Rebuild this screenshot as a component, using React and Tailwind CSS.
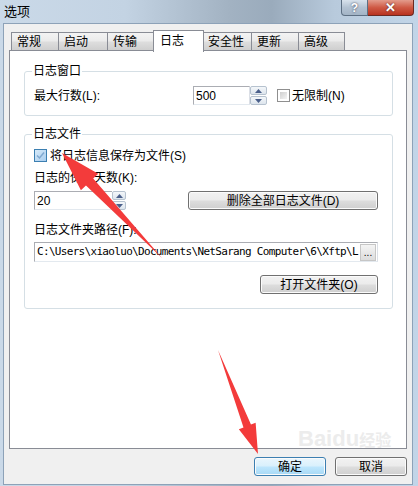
import React from "react";

const sans = "font-['Liberation_Sans','Noto_Sans_CJK_SC',sans-serif]";

const arrowPoints = (tx, ty, px, py, hl, hw, sw) => {
  const len = Math.hypot(px - tx, py - ty);
  const ux = (px - tx) / len;
  const uy = (py - ty) / len;
  const nx = -uy;
  const ny = ux;
  const bx = px - ux * hl;
  const by = py - uy * hl;
  const pts = [
    [tx, ty],
    [bx + (nx * sw) / 2, by + (ny * sw) / 2],
    [bx + (nx * hw) / 2, by + (ny * hw) / 2],
    [px, py],
    [bx - (nx * hw) / 2, by - (ny * hw) / 2],
    [bx - (nx * sw) / 2, by - (ny * sw) / 2],
  ];
  return pts.map((p) => p.join(",")).join(" ");
};

const Btn = ({ children, className = "" }) => (
  <div
    className={`flex items-center justify-center h-[19px] rounded-[3px] border border-[#707070] bg-[linear-gradient(#f2f2f2,#ebebeb_48%,#dddddd_52%,#cfcfcf)] shadow-[inset_0_0_0_1px_#fbfbfb] text-[12px] text-black ${className}`}
  >
    {children}
  </div>
);

const Tri = ({ up }) => (
  <svg width="7" height="4" viewBox="0 0 7 4">
    <polygon points={up ? "0,4 7,4 3.5,0" : "0,0 7,0 3.5,4"} fill="#4a5f8a" />
  </svg>
);

const Spin = ({ className = "" }) => (
  <div className={`flex flex-col h-[19px] gap-[1px] ${className}`}>
    <div className="flex-1 flex items-center justify-center border border-[#b6c2cf] rounded-[2px] bg-[linear-gradient(#f4f7fa,#dde5ed)]">
      <Tri up />
    </div>
    <div className="flex-1 flex items-center justify-center border border-[#b6c2cf] rounded-[2px] bg-[linear-gradient(#f4f7fa,#dde5ed)]">
      <Tri />
    </div>
  </div>
);

const Check = ({ checked }) =>
  checked ? (
    <div className="w-[13px] h-[13px] border border-[#3c7fb1] bg-[linear-gradient(135deg,#d6eaf9,#a9cdee)] flex items-center justify-center">
      <svg width="9" height="9" viewBox="0 0 9 9">
        <path d="M1 4.5 L3.5 7 L8 1.5" stroke="#7fa8d0" strokeWidth="1.5" fill="none" />
      </svg>
    </div>
  ) : (
    <div className="w-[13px] h-[13px] border border-[#8f8f8f] bg-white p-[2px]">
      <div className="w-full h-full bg-[linear-gradient(135deg,#cfcfcf,#f4f4f4)]" />
    </div>
  );

const tabs = [
  { label: "常规", w: "w-[47px]" },
  { label: "启动", w: "w-[49px]" },
  { label: "传输", w: "w-[48px]" },
  { label: "日志", w: "w-[51px]", active: true },
  { label: "安全性", w: "w-[49px]" },
  { label: "更新", w: "w-[47px]" },
  { label: "高级", w: "w-[47px]", last: true },
];

export default function App() {
  return (
    <div
      className={`relative w-[418px] h-[486px] overflow-hidden flex flex-col bg-[linear-gradient(90deg,#cad9e8_0%,#c3d3e3_30%,#a2b2c2_55%,#9aabbc_65%,#b8cadc_80%,#c2d5e8_100%)] ${sans}`}
    >
      {/* title bar */}
      <div className="h-[23px] flex items-start justify-between">
        <span className="pl-[4px] pt-[4px] text-[13px] leading-[15px] text-black">选项</span>
        <div className="flex mr-[4px]">
          <div className="w-[27px] h-[16px] flex items-center justify-center rounded-bl-[4px] border border-t-0 border-[#5d6f83] bg-[linear-gradient(#d8e2ec,#b3c2d2_50%,#a3b4c6)] text-white text-[12px] font-bold leading-none [text-shadow:0_0_2px_#334]">
            ?
          </div>
          <div className="w-[46px] h-[16px] flex items-center justify-center rounded-br-[4px] border border-t-0 border-l-0 border-[#6b2a22] bg-[linear-gradient(#e39c8c,#cf5a45_50%,#b8321f)] text-white text-[13px] font-bold leading-none [text-shadow:0_0_2px_#422]">
            ✕
          </div>
        </div>
      </div>

      {/* client area */}
      <div className="flex-1 ml-[3px] mr-[5px] mb-[1px] flex flex-col bg-[#f0f0f0] border border-[#8da2b8] pl-[5px] pt-[6px]">
        {/* tab strip */}
        <div className="flex items-end h-[20px] pl-[2px] text-[12px] text-black">
          {tabs.map((t) =>
            t.active ? (
              <div
                key={t.label}
                className={`${t.w} -mx-[2px] h-[22px] mb-[-2px] relative z-10 bg-white border border-b-0 border-[#898c95] flex items-center pl-[6px] pb-[2px]`}
              >
                {t.label}
              </div>
            ) : (
              <div
                key={t.label}
                className={`${t.w} h-[18px] border-t border-l ${t.last ? "border-r" : ""} border-[#898c95] bg-[linear-gradient(#f3f3f3,#ebebeb_45%,#dddddd_55%,#cfcfcf)] flex items-center pl-[5px]`}
              >
                {t.label}
              </div>
            )
          )}
        </div>

        {/* tab panel */}
        <div className="w-[398px] h-[399px] border border-[#898c95] bg-white flex flex-col text-[12px] text-black">
          <fieldset className="ml-[14px] w-[369px] mt-[13px] border border-[#d5dfe5] rounded-[3px] pl-[9px] pr-[14px] pt-[8px] pb-[10px]">
            <legend className="ml-[-2px] px-[1px] leading-[14px]">日志窗口</legend>
            <div className="flex items-center h-[19px]">
              <span className="w-[159px] leading-[14px]">最大行数(L):</span>
              <div className="w-[57px] h-[19px] border border-[#abadb3] border-r-[#dbdfe6] border-b-[#e3e9ef] flex items-center pl-[2px]">
                500
              </div>
              <Spin className="w-[17px]" />
              <div className="ml-[10px]">
                <Check />
              </div>
              <span className="ml-[2px] leading-[14px]">无限制(N)</span>
            </div>
          </fieldset>

          <fieldset className="ml-[14px] w-[369px] mt-[11px] border border-[#d5dfe5] rounded-[3px] pl-[9px] pr-[14px] pt-[8px] pb-[14px]">
            <legend className="ml-[-2px] px-[1px] leading-[14px]">日志文件</legend>
            <div className="flex items-center h-[13px] gap-[3px]">
              <Check checked />
              <span className="leading-[14px]">将日志信息保存为文件(S)</span>
            </div>
            <div className="mt-[9px] leading-[14px]">日志的保留天数(K):</div>
            <div className="mt-[6px] flex items-center justify-between">
              <div className="flex">
                <div className="w-[78px] h-[19px] border border-[#abadb3] border-r-0 border-b-[#e3e9ef] flex items-center pl-[2px]">
                  20
                </div>
                <Spin className="w-[14px]" />
              </div>
              <Btn className="w-[190px]">删除全部日志文件(D)</Btn>
            </div>
            <div className="mt-[13px] leading-[14px]">日志文件夹路径(F):</div>
            <div className="mt-[5px] w-[344px] h-[20px] border border-[#abadb3] border-r-[#dbdfe6] border-b-[#e3e9ef] flex items-center">
              <span className="flex-1 whitespace-nowrap pl-[2px] font-['DejaVu_Sans_Mono',monospace] text-[11px] tracking-[-0.68px] leading-[18px]">
                C:\Users\xiaoluo\Documents\NetSarang Computer\6\Xftp\L
              </span>
              <div className="w-[16px] h-[17px] mr-[1px] border border-[#c6c6c6] bg-[linear-gradient(#f4f4f4,#dcdcdc)] flex items-end justify-center text-[10px] leading-[12px] pb-[1px]">
                ...
              </div>
            </div>
            <div className="mt-[13px] flex justify-end">
              <Btn className="w-[118px]">打开文件夹(O)</Btn>
            </div>
          </fieldset>
        </div>

        {/* dialog buttons */}
        <div className="mt-[8px] w-[398px] flex justify-end gap-[9px]">
          <Btn className="w-[72px] !border-[#3c7fb1] !bg-[linear-gradient(#eaf6fd,#d9f0fc_48%,#bee6fd_52%,#a7d9f5)] shadow-[0_0_2px_#7ec2ea]">
            确定
          </Btn>
          <Btn className="w-[72px]">取消</Btn>
        </div>
      </div>

      {/* watermark */}
      <div className="absolute left-[298px] top-[428px] text-[22px] font-bold leading-none text-[#e0e0e0] opacity-60 pointer-events-none">
        Baidu<span className="text-[16px]">经验</span>
      </div>

      {/* annotation arrows */}
      <svg className="absolute inset-0 pointer-events-none" width="418" height="486">
        <polygon points={arrowPoints(162, 258, 62, 153, 40, 24, 10)} fill="#f33b3b" />
        <polygon points={arrowPoints(218, 350, 258, 454, 30, 18, 8)} fill="#f33b3b" />
      </svg>
    </div>
  );
}
